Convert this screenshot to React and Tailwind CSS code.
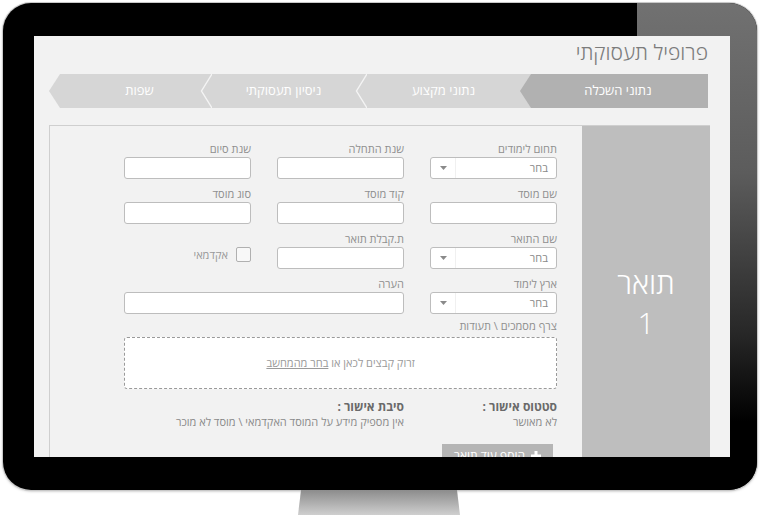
import React from 'react'

const font = { fontFamily: '"Open Sans", "Liberation Sans", sans-serif' }

function Tabs() {
  return (
    <div className="relative h-[34px] flex bg-[#d6d6d6] [clip-path:polygon(11px_0,100%_0,100%_100%,11px_100%,0_50%)]">
      <div className="w-[188px] shrink-0 bg-[#b1b1b1] flex items-center justify-center text-white text-[13px] [clip-path:polygon(100%_0,100%_100%,11px_100%,0_50%,11px_0)] pl-[8px]">
        נתוני השכלה
      </div>
      <div className="w-[153px] shrink-0 flex items-center justify-center text-white text-[13px]">נתוני מקצוע</div>
      <Sep />
      <div className="w-[143px] shrink-0 flex items-center justify-center text-white text-[13px]">ניסיון תעסוקתי</div>
      <Sep />
      <div className="flex-1 flex items-center justify-center text-white text-[13px] pl-[30px]">שפות</div>
    </div>
  )
}

function Sep() {
  return (
    <svg width="12" height="34" viewBox="0 0 12 34" className="shrink-0">
      <polyline points="12,0 1.5,17 12,34" fill="none" stroke="#f4f4f4" strokeWidth="1.4" />
    </svg>
  )
}

function Field({ label, select, wide }) {
  return (
    <div className={wide ? 'col-span-2' : ''}>
      <div className="text-[11px] leading-[14px] text-[#8f8f8f] mb-[1px]">{label}</div>
      {select ? (
        <div className="h-[22px] bg-white border border-[#bdbdbd] rounded-[3px] flex items-center">
          <span className="flex-1 text-[11px] text-[#8a8a8a] pr-[8px]">בחר</span>
          <div className="w-[25px] h-full border-r border-[#f0f0f0] flex items-center justify-center">
            <svg width="7" height="4" viewBox="0 0 7 4">
              <polygon points="0,0 7,0 3.5,4" fill="#8a8a8a" />
            </svg>
          </div>
        </div>
      ) : (
        <div className="h-[22px] bg-white border border-[#bdbdbd] rounded-[3px]" />
      )}
    </div>
  )
}

export default function App() {
  return (
    <div className="w-[760px] h-[515px] bg-white overflow-hidden" style={font}>
      <div className="ml-[3px] mt-[3px] w-[754px] h-[487px] relative rounded-[28px] bg-black pt-[33px] pl-[31px] pr-[27px] ring-1 ring-[#c8c8c8] shadow-[0_1px_3px_rgba(0,0,0,0.35)]">
        {/* glare on the top-right of the bezel */}
        <div className="absolute left-[634px] top-0 right-0 bottom-0 rounded-tr-[28px] rounded-br-[28px] bg-[linear-gradient(to_bottom,#717171_0%,#5c5c5c_35%,#272727_68%,#000_86%)]" />

        <div dir="rtl" className="relative h-[421px] bg-[#f2f2f2] overflow-hidden">
          <div className="pr-[22px] pt-[2px] h-[38px] text-[21px] leading-[28px] text-[#7c7c7c] font-light">
            פרופיל תעסוקתי
          </div>
          <div className="mr-[22px] ml-[15px]">
            <Tabs />
          </div>

          <div className="mt-[17px] mr-[20px] ml-[15px] border-t border-r-0 border-l border-[#cfcfcf] flex h-[400px]">
            <div className="w-[128px] shrink-0 bg-[#bebebe] flex flex-col items-center pt-[137px] text-white text-[30px] leading-[40px] font-light">
              <div>תואר</div>
              <div>1</div>
            </div>

            <div className="flex-1 pr-[25px] pt-[16px]">
              <div className="grid grid-cols-[127px_127px_127px] gap-x-[26px] gap-y-[8px]">
                <Field label="תחום לימודים" select />
                <Field label="שנת התחלה" />
                <Field label="שנת סיום" />

                <Field label="שם מוסד" />
                <Field label="קוד מוסד" />
                <Field label="סוג מוסד" />

                <Field label="שם התואר" select />
                <Field label="ת.קבלת תואר" />
                <div className="pt-[15px] flex items-start gap-[8px]">
                  <div className="w-[15px] h-[15px] border border-[#b0b0b0] bg-[#f8f8f8] rounded-[2px]" />
                  <span className="text-[11px] leading-[15px] text-[#999]">אקדמאי</span>
                </div>

                <Field label="ארץ לימוד" select />
                <Field label="הערה" wide />
              </div>

              <div className="w-[433px] mt-[5px]">
                <div className="text-[11px] leading-[14px] text-[#8f8f8f]">צרף מסמכים \ תעודות</div>
                <div className="mt-[4px] h-[52px] bg-white border border-dashed border-[#9a9a9a] rounded-[3px] flex items-center justify-center text-[11px] text-[#9a9a9a]">
                  <span>
                    זרוק קבצים לכאן או <span className="underline">בחר מהמחשב</span>
                  </span>
                </div>

                <div className="mt-[10px] grid grid-cols-[127px_280px] gap-x-[26px]">
                  <div>
                    <div className="text-[12px] leading-[16px] font-bold text-[#6a6a6a]">סטטוס אישור :</div>
                    <div className="text-[11px] leading-[14px] text-[#8a8a8a]">לא מאושר</div>
                  </div>
                  <div>
                    <div className="text-[12px] leading-[16px] font-bold text-[#6a6a6a]">סיבת אישור :</div>
                    <div className="text-[11px] leading-[14px] text-[#8a8a8a]">אין מספיק מידע על המוסד האקדמאי \ מוסד לא מוכר</div>
                  </div>
                </div>

                <div className="mt-[15px] mr-[4px] w-[111px] h-[24px] bg-[#b5b5b5] flex items-center justify-center gap-[6px] text-white text-[12px]">
                  <svg width="10" height="10" viewBox="0 0 10 10">
                    <path d="M5 0v10M0 5h10" stroke="#fff" strokeWidth="3" />
                  </svg>
                  <span>הוסף עוד תואר</span>
                </div>
              </div>
            </div>
          </div>
        </div>
      </div>

      {/* stand */}
      <div className="ml-[298px] w-[162px] h-[25px] bg-[linear-gradient(to_bottom,#8c8c8c,#cfcfcf)] [clip-path:polygon(3px_0,159px_0,162px_100%,0_100%)]" />
    </div>
  )
}
